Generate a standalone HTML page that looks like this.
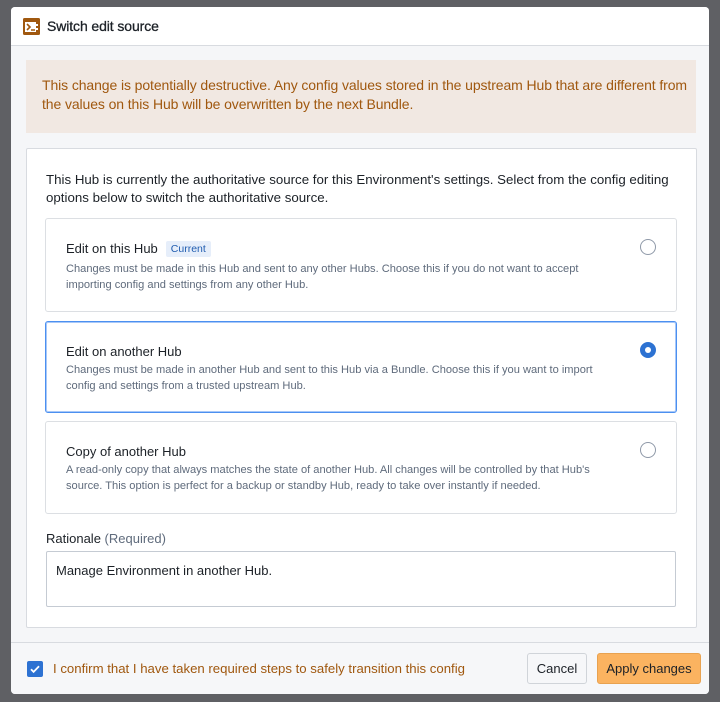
<!DOCTYPE html>
<html><head><meta charset="utf-8"><style>
*{box-sizing:border-box;margin:0;padding:0}
body{width:720px;height:702px;background:#5f6064;font-family:"Liberation Sans",sans-serif;position:relative;overflow:hidden}
.dlg{position:absolute;left:11px;top:7px;width:698px;height:687px;background:#f5f6f8;border-radius:4px;overflow:hidden}
.hdr{position:absolute;left:0;top:0;width:698px;height:39px;background:#fff;border-bottom:1px solid #d8dbe0}
.hdr .t{position:absolute;left:36px;top:11px;font-size:14px;color:#1c2127;letter-spacing:-0.1px;-webkit-text-stroke:0.3px #1c2127}
.warn{position:absolute;left:15px;top:53px;width:670px;height:73px;background:#f1e8e2;color:#a0580f;font-size:14px;line-height:19px;padding:16px 0 0 16px;white-space:nowrap;letter-spacing:-0.1px}
.panel{position:absolute;left:15px;top:141px;width:671px;height:480px;background:#fff;border:1px solid #d8dbe0;border-radius:2px}
.intro{position:absolute;left:19px;top:22px;font-size:13.3px;line-height:18px;color:#1c2127;white-space:nowrap}
.card{position:absolute;left:18px;width:632px;background:#fff;border:1px solid #dcdfe3;border-radius:3px}
.card.sel{border-color:#4c90f0;box-shadow:0 0 0 1px #a8c8f8 inset}
.card .h{position:absolute;left:20px;font-size:13px;color:#1c2127}
.card .d{position:absolute;left:20px;font-size:11.1px;line-height:16px;color:#5f6b7c;white-space:nowrap}
.tag{display:inline-block;margin-left:8px;background:#e6eefa;color:#215db0;font-size:10.5px;padding:2px 5px;border-radius:2px;vertical-align:1px}
.radio{position:absolute;right:20px;width:16px;height:16px;border-radius:50%;border:1px solid #8f99a8;background:#fff}
.radio.on{background:#2d72d2;border-color:#2d72d2}
.radio.on:after{content:"";position:absolute;left:4px;top:4px;width:6px;height:6px;border-radius:50%;background:#fff}
.lbl{position:absolute;left:19px;top:382px;font-size:13px;color:#1c2127}
.lbl span{color:#5f6b7c}
.ta{position:absolute;left:19px;top:402px;width:630px;height:56px;border:1px solid #c5cbd3;border-radius:2px;font-size:13px;color:#1c2127;padding:11px 0 0 9px}
.foot{position:absolute;left:0;top:635px;width:698px;height:52px;border-top:1px solid #d8dbe0;background:#f6f7f9}
.cb{position:absolute;left:16px;top:18px;width:16px;height:16px;background:#2d72d2;border-radius:2px}
.ft{position:absolute;left:42px;top:18px;font-size:13.2px;color:#a0580f;white-space:nowrap}
.btn{position:absolute;top:10px;height:31px;border-radius:3px;font-size:13px;color:#1c2127;text-align:center;line-height:30px}
</style></head><body>
<div class="dlg">
 <div class="hdr">
  <svg style="position:absolute;left:12px;top:11px" width="17" height="17" viewBox="0 0 17 17"><rect x="0" y="0" width="17" height="17" rx="1.5" fill="#a0580f"/><rect x="2" y="4" width="11" height="10" fill="#fff"/><rect x="13" y="6" width="2" height="2" fill="#fff"/><rect x="13" y="10" width="2" height="2" fill="#fff"/><path d="M4 6l3 3-3 3" stroke="#a0580f" stroke-width="1.6" fill="none"/><path d="M8 12h4" stroke="#a0580f" stroke-width="1.6"/></svg>
  <div class="t">Switch edit source</div>
 </div>
 <div class="warn">This change is potentially destructive. Any config values stored in the upstream Hub that are different from<br>the values on this Hub will be overwritten by the next Bundle.</div>
 <div class="panel">
  <div class="intro">This Hub is currently the authoritative source for this Environment's settings. Select from the config editing<br>options below to switch the authoritative source.</div>
  <div class="card" style="top:69px;height:94px">
   <div class="h" style="top:22px">Edit on this Hub<span class="tag">Current</span></div>
   <div class="d" style="top:42px">Changes must be made in this Hub and sent to any other Hubs. Choose this if you do not want to accept<br>importing config and settings from any other Hub.</div>
   <div class="radio" style="top:20px"></div>
  </div>
  <div class="card sel" style="top:172px;height:92px">
   <div class="h" style="top:22px">Edit on another Hub</div>
   <div class="d" style="top:40px">Changes must be made in another Hub and sent to this Hub via a Bundle. Choose this if you want to import<br>config and settings from a trusted upstream Hub.</div>
   <div class="radio on" style="top:20px"></div>
  </div>
  <div class="card" style="top:272px;height:93px">
   <div class="h" style="top:22px">Copy of another Hub</div>
   <div class="d" style="top:40px">A read-only copy that always matches the state of another Hub. All changes will be controlled by that Hub's<br>source. This option is perfect for a backup or standby Hub, ready to take over instantly if needed.</div>
   <div class="radio" style="top:20px"></div>
  </div>
  <div class="lbl">Rationale <span>(Required)</span></div>
  <div class="ta">Manage Environment in another Hub.</div>
 </div>
 <div class="foot">
  <div class="cb"><svg width="16" height="16" viewBox="0 0 16 16"><path d="M4 8.3l2.6 2.6L12 5.3" stroke="#fff" stroke-width="1.8" fill="none"/></svg></div>
  <div class="ft">I confirm that I have taken required steps to safely transition this config</div>
  <div class="btn" style="left:516px;width:60px;background:#f6f7f9;border:1px solid #d0d4d9">Cancel</div>
  <div class="btn" style="left:586px;width:104px;background:#fbb360;border:1px solid #e8a250">Apply changes</div>
 </div>
</div>
</body></html>
